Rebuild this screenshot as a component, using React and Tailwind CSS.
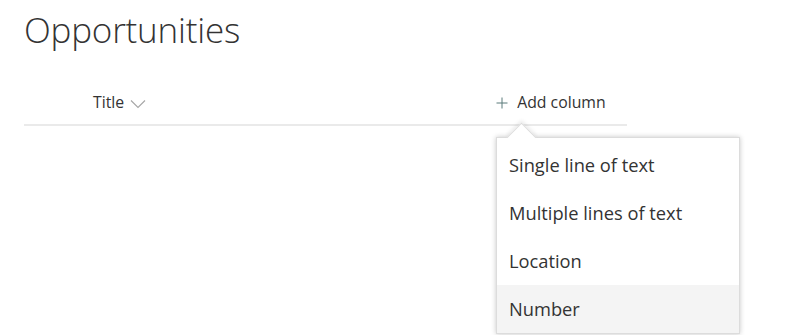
import React from "react";

export default function App() {
  const items = ["Single line of text", "Multiple lines of text", "Location", "Number"];
  return (
    <div className="relative w-[800px] h-[335px] overflow-hidden bg-white text-[#333333]" style={{ fontFamily: '"Open Sans", "Noto Sans", sans-serif' }}>
      <div className="pl-[24px] pt-[6px]">
        <h1 className="text-[35px] font-light leading-[48px] tracking-[-0.2px] text-[#333333]">Opportunities</h1>
      </div>
      <div className="ml-[24px] w-[603px] mt-[33px] border-b-[2px] border-[#eaeaea] h-[39px] flex items-start">
        <div className="ml-[69px] flex items-center h-[32px] gap-[6px]">
          <span className="text-[15.8px] font-[370] text-[#333333]">Title</span>
          <svg width="16" height="10" viewBox="0 0 16 10" className="mt-[1px]">
            <path d="M1 1.5 L8 8.5 L15 1.5" fill="none" stroke="#a6a6a6" strokeWidth="1.1" />
          </svg>
        </div>
        <div className="ml-[350px] flex items-center h-[32px] gap-[9px]">
          <svg width="12" height="12" viewBox="0 0 12 12">
            <path d="M6 0.5 V11.5 M0.5 6 H11.5" stroke="#5a7a7a" strokeWidth="1" fill="none" />
          </svg>
          <span className="text-[15.8px] font-[370] text-[#333333]">Add column</span>
        </div>
      </div>

      <div className="absolute left-[496px] top-[137px] w-[244px] bg-white border border-[#dcdcdc] shadow-[0_0_5px_rgba(0,0,0,0.22)]">
        <div className="absolute left-[14px] -top-[11px] w-[21px] h-[21px] rotate-45 bg-white border-l border-t border-[#dcdcdc] shadow-[-2px_-2px_4px_rgba(0,0,0,0.08)]" />
        <div className="relative pt-[3px] bg-white">
          {items.map((t, i) => (
            <div
              key={t}
              className={`h-[48px] flex items-center pl-[12px] text-[18.3px] font-[370] text-[#333333] ${i === 3 ? "bg-[#f4f4f4]" : ""}`}
            >
              {t}
            </div>
          ))}
        </div>
      </div>
    </div>
  );
}
